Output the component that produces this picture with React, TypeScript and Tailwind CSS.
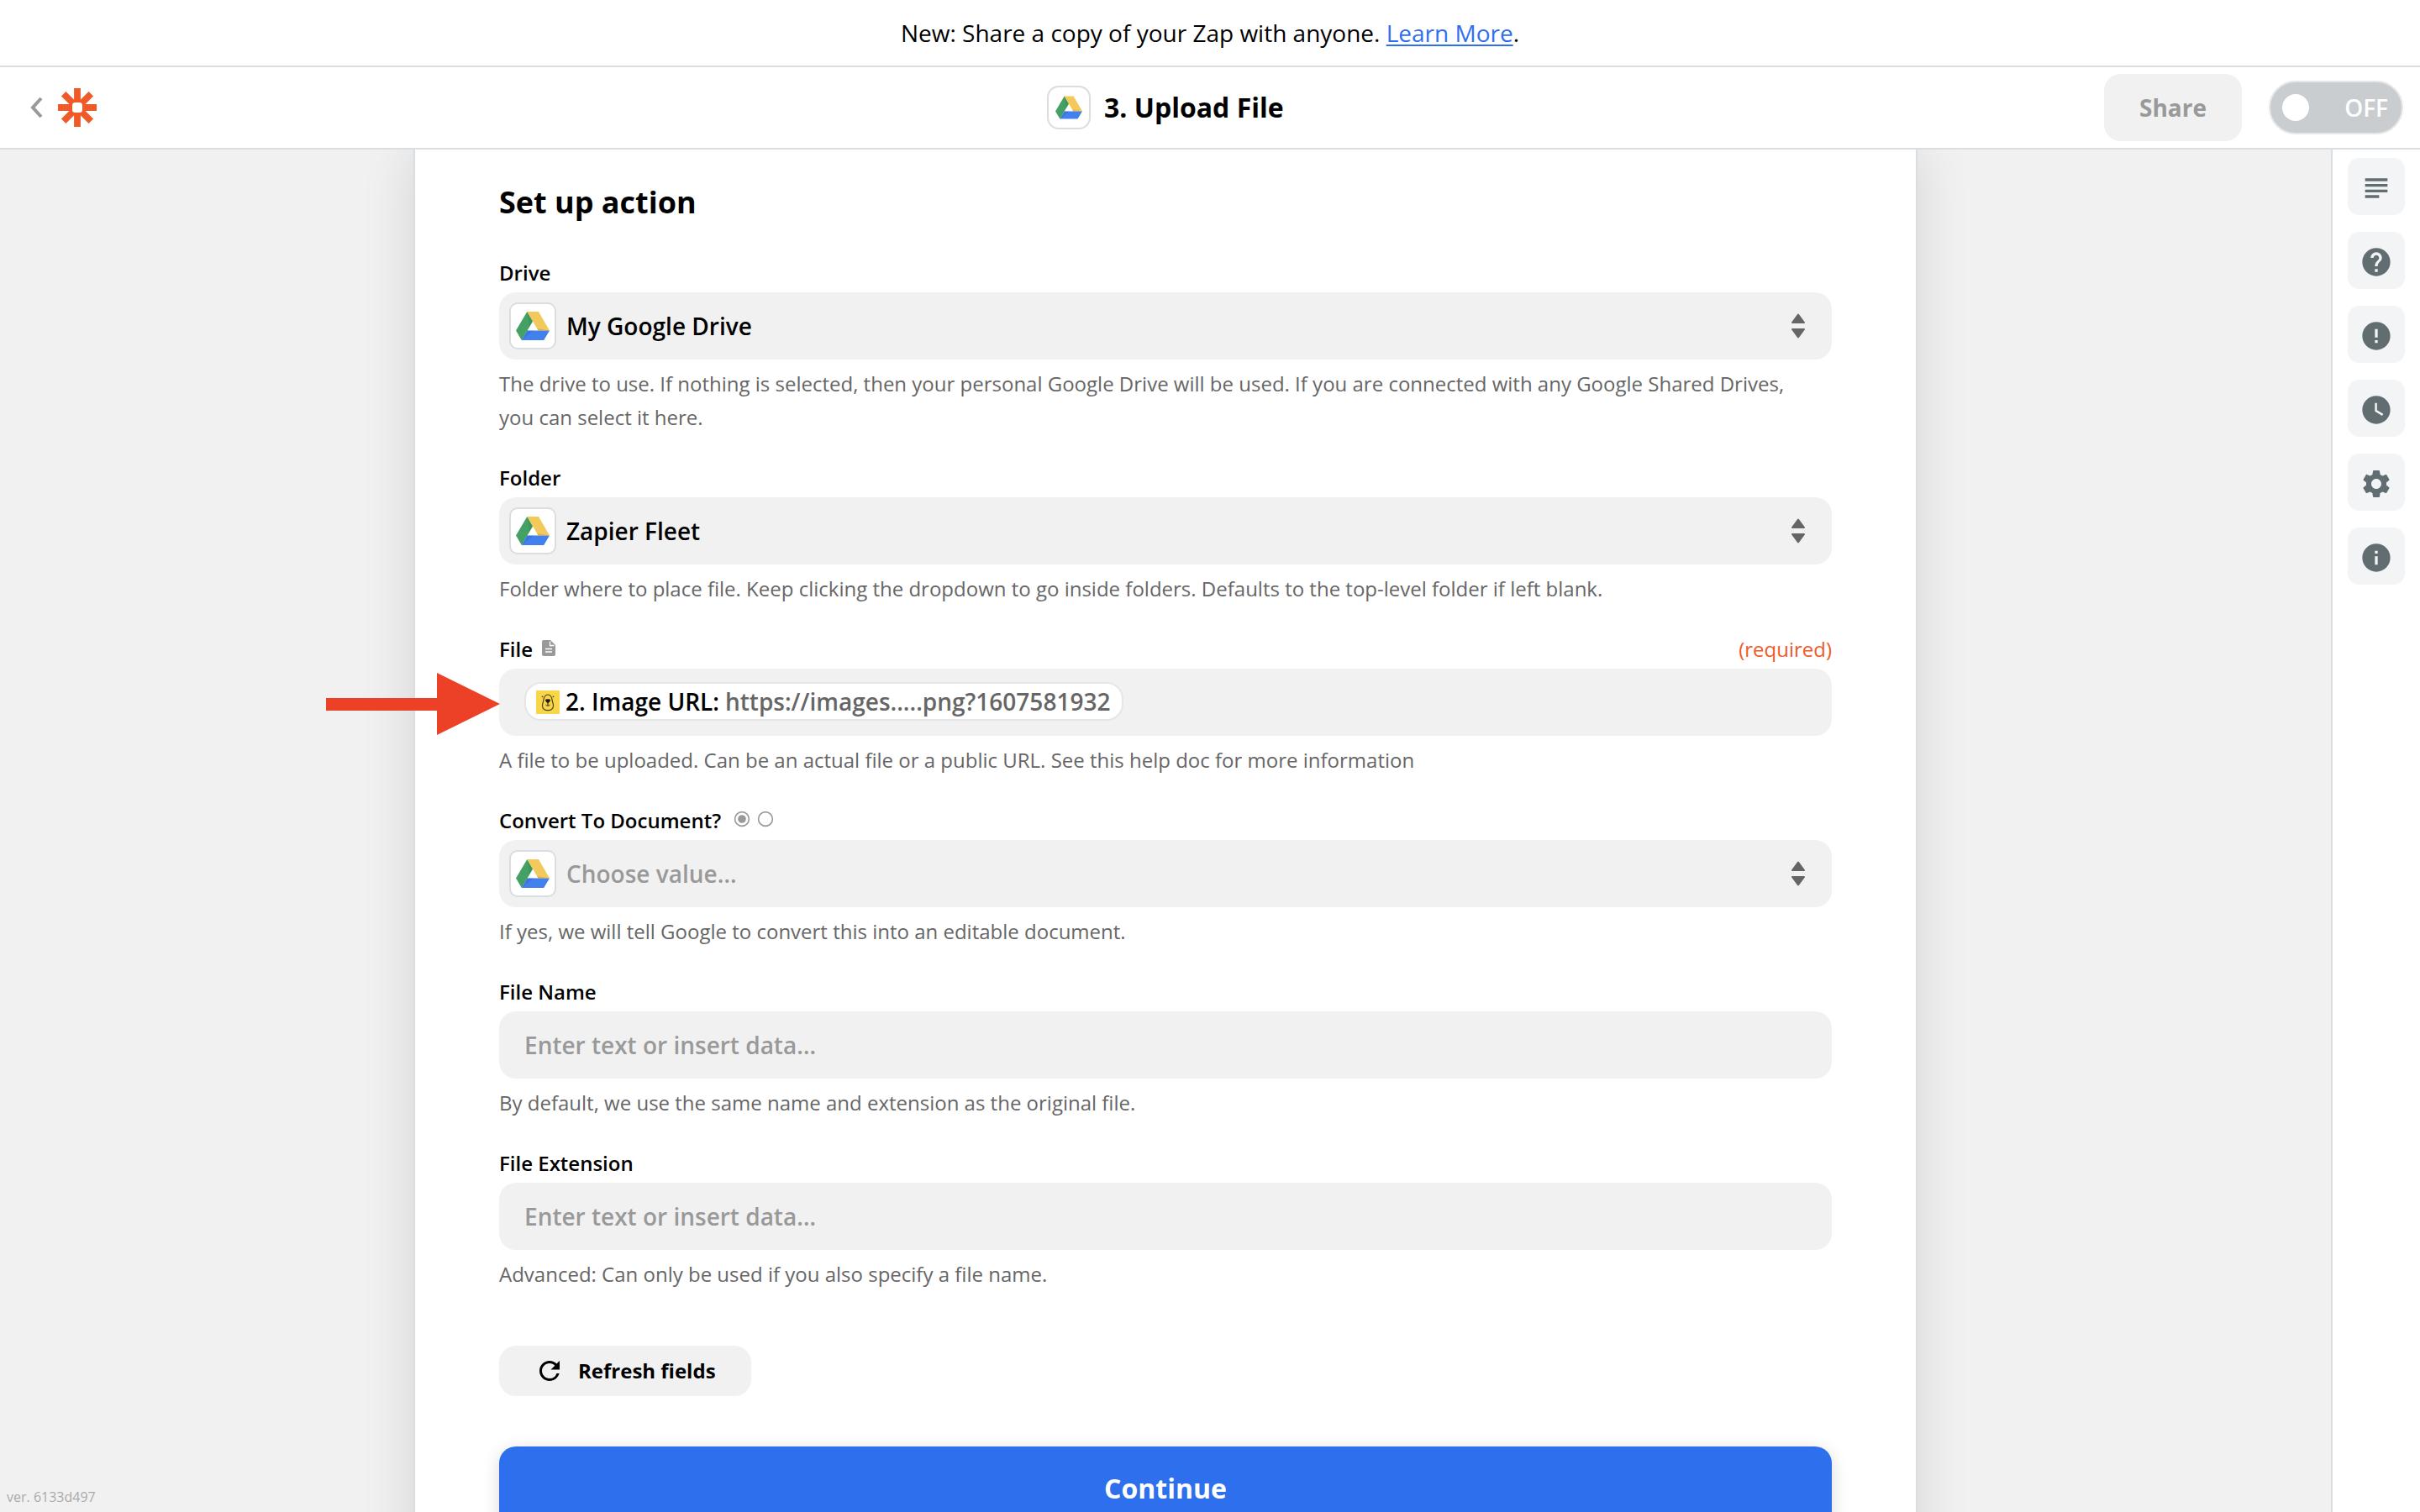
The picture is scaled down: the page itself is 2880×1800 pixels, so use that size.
import type { ReactNode } from 'react'
import { MdSubject, MdHelp, MdError, MdWatchLater, MdSettings, MdInfo, MdRefresh } from 'react-icons/md'

type Field = {
  label: string
  help: string
  kind: 'select' | 'text' | 'pill'
  value?: string
  placeholder?: string
  required?: boolean
  mark?: 'file' | 'bool'
}

const fields: Field[] = [
  {
    label: 'Drive',
    kind: 'select',
    value: 'My Google Drive',
    help: 'The drive to use. If nothing is selected, then your personal Google Drive will be used. If you are connected with any Google Shared Drives, you can select it here.',
  },
  {
    label: 'Folder',
    kind: 'select',
    value: 'Zapier Fleet',
    help: 'Folder where to place file. Keep clicking the dropdown to go inside folders. Defaults to the top-level folder if left blank.',
  },
  {
    label: 'File',
    kind: 'pill',
    required: true,
    mark: 'file',
    help: 'A file to be uploaded. Can be an actual file or a public URL. See this help doc for more information',
  },
  {
    label: 'Convert To Document?',
    kind: 'select',
    placeholder: 'Choose value…',
    mark: 'bool',
    help: 'If yes, we will tell Google to convert this into an editable document.',
  },
  {
    label: 'File Name',
    kind: 'text',
    placeholder: 'Enter text or insert data…',
    help: 'By default, we use the same name and extension as the original file.',
  },
  {
    label: 'File Extension',
    kind: 'text',
    placeholder: 'Enter text or insert data…',
    help: 'Advanced: Can only be used if you also specify a file name.',
  },
]

const railIcons = [MdSubject, MdHelp, MdError, MdWatchLater, MdSettings, MdInfo]

function DriveLogo({ className }: { className: string }) {
  return (
    <svg viewBox="0 0 40 34" className={className}>
      <path d="M13.3 0 0 22.6 6.8 34 20 11.5Z" fill="#45a163" />
      <path d="M13.3 0H27L40 22.6H26.6Z" fill="#f4c95b" />
      <path d="M13.5 22.6H40L33.2 34H6.8Z" fill="#4280ee" />
      <path d="M13.3 0 20 11.5 16 18.3Z" fill="#2c7f4a" opacity=".3" />
      <path d="M25 20 40 22.6H26.6Z" fill="#b98f2c" opacity=".4" />
      <path d="M13.5 22.6H21L6.8 34Z" fill="#2b5cc4" opacity=".3" />
    </svg>
  )
}

function ZapierMark() {
  return (
    <svg viewBox="-23 -23 46 46" className="size-[46px]">
      <path d="M0-23V23M-23 0H23M-16.3-16.3 16.3 16.3M16.3-16.3-16.3 16.3" stroke="#ef5a29" strokeWidth="7.8" />
      <rect x="-6" y="-6" width="12" height="12" rx="3.5" fill="#fff" />
    </svg>
  )
}

function Arrows() {
  return (
    <svg viewBox="0 0 16 30" className="w-4 h-[30px]" fill="#666" stroke="#666" strokeWidth="2" strokeLinejoin="round">
      <path d="M8 1.5 15 11H1Z" />
      <path d="M8 28.5 15 19H1Z" />
    </svg>
  )
}

function DogIcon() {
  return (
    <svg viewBox="0 0 28 28" className="size-7 mt-0.5">
      <rect width="28" height="28" fill="#f9d648" />
      <path d="M14 5c3.5 0 4.8 3.5 5.2 7 .4 2.5 1.3 3.5 1.3 6 0 3.6-2.8 5.7-6.5 5.7S7.5 21.600 7.5 18c0-2.5.9-3.5 1.3-6C9.200 8.5 10.5 5 14 5Z" fill="none" stroke="#4a4222" strokeWidth="1.2" />
      <path d="M11 11c1-1 2-1 3-.6 1-.4 2-.4 3 .6 0 2-1.5 3.5-3 4.3-1.5-.8-3-2.3-3-4.3Z" fill="#1f1c12" />
      <path d="M14 15v2.5M11.5 17c.5 1.5 4.5 1.5 5 0" fill="none" stroke="#1f1c12" strokeWidth="1" />
      <circle cx="7.5" cy="7.3" r=".9" fill="#4a4222" />
      <circle cx="20.5" cy="7.3" r=".9" fill="#4a4222" />
    </svg>
  )
}

function FileMark() {
  return (
    <svg viewBox="0 0 16 19" className="ml-[11px] w-4 h-[19px] -mt-1">
      <path d="M2 0h8l6 6v11a2 2 0 0 1-2 2H2a2 2 0 0 1-2-2V2a2 2 0 0 1 2-2Z" fill="#999" />
      <path d="M9.5 1.5V6.5H14.5M4 10.5h8M4 14h8" fill="none" stroke="#fff" strokeWidth="1.3" />
    </svg>
  )
}

function BoolMark() {
  return (
    <svg viewBox="0 0 48 20" className="ml-[15px] w-12 h-5 -mt-1" fill="none" stroke="#999" strokeWidth="1.6">
      <circle cx="10" cy="10" r="8.4" />
      <circle cx="10" cy="10" r="4.8" fill="#999" stroke="none" />
      <circle cx="38" cy="10" r="8.4" />
    </svg>
  )
}

function FieldBox({ children, className }: { children: ReactNode; className: string }) {
  return <div className={`flex items-center h-20 rounded-[20px] bg-[#f1f1f1] text-[28px] font-semibold ${className}`}>{children}</div>
}

function FieldRow({ field }: { field: Field }) {
  return (
    <div className="mb-8">
      <div className="flex items-center h-10 mb-[3px] text-2xl">
        <span className="font-semibold">{field.label}</span>
        {field.mark === 'file' && <FileMark />}
        {field.mark === 'bool' && <BoolMark />}
        {field.required && <span className="ml-auto text-[#ef5a29]">(required)</span>}
      </div>

      {field.kind === 'select' && (
        <FieldBox className="pl-3 pr-8">
          <div className="flex items-center justify-center size-14 mr-3 bg-white border-2 border-[#d9dee2] rounded-[10px]">
            <DriveLogo className="w-10 h-[34px]" />
          </div>
          <span className={field.value ? 'text-black' : 'text-[#999]'}>{field.value ?? field.placeholder}</span>
          <span className="ml-auto">
            <Arrows />
          </span>
        </FieldBox>
      )}

      {field.kind === 'text' && (
        <FieldBox className="px-[30px]">
          <span className="text-[#999]">{field.placeholder}</span>
        </FieldBox>
      )}

      {field.kind === 'pill' && (
        <FieldBox className="px-[30px]">
          <div className="flex items-center h-[46px] -mt-0.5 pl-3 pr-3.5 bg-white border-2 border-[#e6e6e6] rounded-[20px]">
            <DogIcon />
            <span className="ml-[7px]">2. Image URL:</span>
            <span className="ml-[7px] text-[#666]">https://images.....png?1607581932</span>
          </div>
        </FieldBox>
      )}

      <p className="mt-[9px] pr-6 text-2xl leading-10 text-[#666]">{field.help}</p>
    </div>
  )
}

export default function App() {
  return (
    <div className="flex flex-col w-[2880px] h-[1800px] overflow-hidden bg-white text-black font-['Open_Sans',sans-serif]">
      {/* Announcement */}
      <div className="flex items-center justify-center h-20 shrink-0 border-b-2 border-[#d9dee2] text-[28px]">
        <p>
          New: Share a copy of your Zap with anyone.{' '}
          <a className="text-[#2e6fee] underline decoration-2 underline-offset-[3px]">Learn More</a>.
        </p>
      </div>

      {/* Header */}
      <header className="flex items-center h-[98px] shrink-0 pl-9 pr-5 border-b-2 border-[#d9dee2]">
        <div className="flex items-center w-[1210px]">
          <svg viewBox="0 0 15 28" className="w-[15px] h-7 mr-[18px]" fill="none" stroke="#999" strokeWidth="4">
            <path d="M13 3 3 14 13 25" />
          </svg>
          <ZapierMark />
        </div>
        <div className="flex items-center">
          <div className="flex items-center justify-center size-[52px] mr-4 border-2 border-[#d9dee2] rounded-[14px]">
            <DriveLogo className="w-8 h-7" />
          </div>
          <h1 className="text-[32px] font-bold">3. Upload File</h1>
        </div>
        <div className="flex items-center ml-auto">
          <button className="w-[164px] h-20 mr-8 rounded-[20px] bg-[#f1f1f1] text-[28px] font-bold text-[#999]">Share</button>
          <div className="flex items-center justify-between w-40 h-16 pl-3.5 pr-4 rounded-full bg-[#c9cdd0] border-2 border-[#e6e7e8] text-[28px] font-semibold text-white">
            <span className="size-8 rounded-full bg-white" />
            OFF
          </div>
        </div>
      </header>

      <div className="flex flex-1 min-h-0">
        <main className="relative flex-1 flex overflow-hidden pl-[492px] bg-[#f1f1f1]">
          <section className="w-[1790px] h-[1800px] shrink-0 px-[100px] bg-white border-x-2 border-[#d9dee2] shadow-[0_0_60px_rgba(0,0,0,0.12)]">
            <h2 className="mt-[34px] mb-[35px] text-[36px] leading-[58px] font-bold">Set up action</h2>
            {fields.map((f) => (
              <FieldRow key={f.label} field={f} />
            ))}
            <button className="flex items-center w-[300px] h-[60px] mt-[65px] mb-[60px] pl-[42px] rounded-[20px] bg-[#f1f1f1] text-2xl font-bold">
              <MdRefresh className="size-9 mr-4" />
              Refresh fields
            </button>
            <button className="w-full h-[100px] rounded-[20px] bg-[#2e6fee] text-[32px] font-bold text-white shadow-[0_4px_20px_rgba(0,0,0,0.15)]">
              Continue
            </button>
          </section>

          {/* Pointer to the File field */}
          <svg viewBox="0 0 207 74" className="absolute left-[388px] top-[623px] w-[207px] h-[74px]" fill="#ec4127">
            <path d="M0 30H132V0L207 37 132 74V45H0Z" />
          </svg>
          <span className="absolute left-2 bottom-1.5 text-base text-[#aaa]">ver. 6133d497</span>
        </main>

        <aside className="flex flex-col items-center gap-5 w-[106px] shrink-0 pt-2.5 border-l-2 border-[#d9dee2]">
          {railIcons.map((Icon, i) => (
            <button key={i} className="flex items-center justify-center size-[68px] pt-[3px] rounded-[14px] bg-[#f2f4f6] text-[#626d71]">
              <Icon className="size-10" />
            </button>
          ))}
        </aside>
      </div>
    </div>
  )
}
